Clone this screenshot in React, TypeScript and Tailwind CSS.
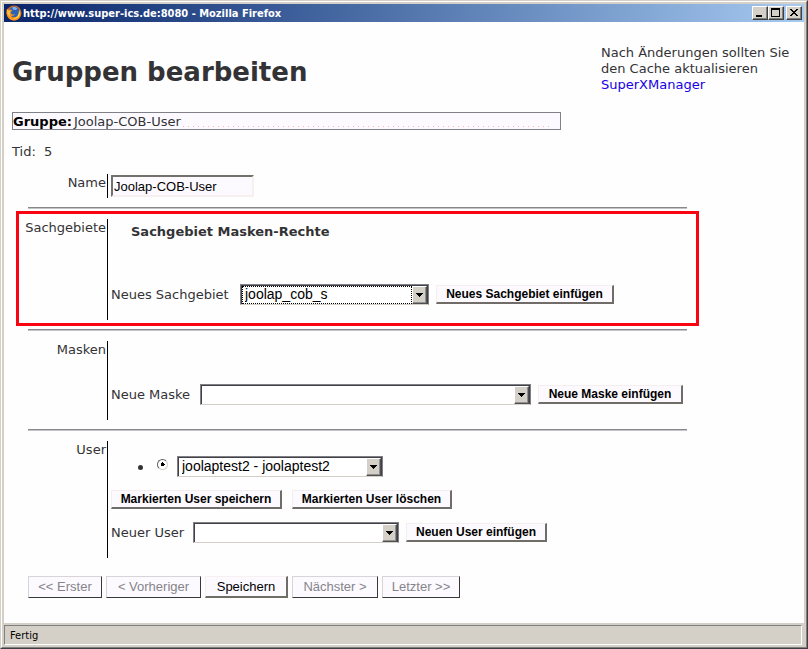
import type { ReactNode } from "react";

const sans = "font-['Liberation_Sans',Arial,sans-serif]";

function Firefox() {
  return (
    <svg viewBox="0 0 16 16" className="h-4 w-4 shrink-0" aria-hidden="true">
      <circle cx="8" cy="8" r="7.5" fill="#e06a10" />
      <circle cx="8.2" cy="6.8" r="5.3" fill="#2a63b8" />
      <path d="M6 2.500c2-1 4.500-.5 5.500 1.200L9.500 5 7 4.500z" fill="#7fb4ea" />
      <path d="M1 3.500 2.500 5 5 4.500l1.500 1.300-1.500.7-.3 1.500 1.800 1.800 2.500-.8c-.8 2-3.500 2.500-5 1.200 1.500 2.800 6 3 8 .3 1.500-2 1.500-4 .8-5.500 1.800 1.500 2.500 4.500 1.200 7-2 3.800-7.500 4.500-10.700 1.800C.3 10.700 0 7 1 3.500z" fill="#f79420" />
      <path d="M13 5c1.500 2 1.400 5-.5 7-1.500 1.700-4 2.300-6 1.500 3.500 0 6.500-2.500 6.500-8.500z" fill="#ffd84a" />
      <path d="M1.200 4.500 2.500 6l2-.6-.8 2.100c-.5 2 .5 4 2 5C2.500 11.500.7 8.500 1.200 4.500z" fill="#ffc13a" />
    </svg>
  );
}

function WindowButton({ label, children }: { label: string; children: ReactNode }) {
  return (
    <button
      aria-label={label}
      className="flex h-3.5 w-4 items-center justify-center border border-t-white border-l-white border-r-[#404040] border-b-[#404040] bg-[#d4d0c8] shadow-[inset_-1px_-1px_0_#808080]"
    >
      <svg viewBox="0 0 12 12" className="h-3 w-3 shrink-0" shapeRendering="crispEdges">
        {children}
      </svg>
    </button>
  );
}

function Combo({ id, label, width, options, focused }: { id: string; label?: string; width: string; options: string[]; focused?: boolean }) {
  return (
    <span className={`relative inline-block h-[21px] ${width}`}>
      <select
        id={id}
        aria-label={label}
        className={`block h-full w-full appearance-none border border-t-[#808084] border-l-[#808084] border-r-[#808084] border-b-[#d4d0c8] bg-white pl-1 text-sm leading-[19px] text-black shadow-[inset_1px_1px_0_#404048,inset_-1px_0_0_#404048] outline-none ${sans}`}
      >
        {options.map((o) => (
          <option key={o}>{o}</option>
        ))}
      </select>
      {focused && <span className="pointer-events-none absolute top-0.5 right-[17px] bottom-px left-0.5 border border-dotted border-black" />}
      <span className="pointer-events-none absolute top-0.5 right-0.5 flex h-[18px] w-[15px] items-center justify-center border border-t-white border-l-white border-r-[#505050] border-b-[#505050] bg-[#d4d0c8] shadow-[inset_-1px_-1px_0_#909090]">
        <svg viewBox="0 0 7 4" className="h-1 w-[7px]" shapeRendering="crispEdges">
          <path d="M0 0h7L3.500 4z" />
        </svg>
      </span>
    </span>
  );
}

function SmallButton({ width, children }: { width: string; children: ReactNode }) {
  return (
    <button
      className={`h-[19px] border border-t-[#f4eeee] border-l-[#f4eeee] border-r-2 border-b-2 border-r-[#706c68] border-b-[#706c68] bg-[#fcfaff] text-center text-xs leading-4 font-bold whitespace-nowrap text-black ${width} ${sans}`}
    >
      {children}
    </button>
  );
}

function NavButton({ width, disabled, children }: { width: string; disabled?: boolean; children: ReactNode }) {
  return (
    <button
      disabled={disabled}
      className={`h-[22px] border bg-[#fcfaff] text-center text-[13px] leading-5 whitespace-nowrap ${width} ${sans} ${
        disabled
          ? "border-t-[#d8d4d8] border-l-[#d8d4d8] border-r-[#38383c] border-b-[#38383c] text-[#86848a]"
          : "border-r-2 border-b-2 border-t-[#f8f0f0] border-l-[#f8f0f0] border-r-[#706c68] border-b-[#706c68] text-black"
      }`}
    >
      {children}
    </button>
  );
}

function Section({ label, htmlFor, height, children, marked }: { label: string; htmlFor?: string; height: string; children: ReactNode; marked?: boolean }) {
  return (
    <section className={`relative flex ${height}`}>
      <div className="flex w-20 shrink-0 justify-end border-r border-black pt-px pr-px">
        {htmlFor ? <label htmlFor={htmlFor}>{label}</label> : label}
      </div>
      <div className="min-w-0 flex-1 pl-[3px]">{children}</div>
      {marked && <div className="pointer-events-none absolute -top-2 -right-3 -bottom-1.5 -left-3 border-3 border-[#fb0412]" />}
    </section>
  );
}

function Rule() {
  return <hr className="mt-[9px] mb-2.5 h-0.5 border-0 border-t border-b border-t-[#88888c] border-b-[#c4c4c8]" />;
}

export default function App() {
  return (
    <div className="flex min-h-screen flex-col border border-t-[#d4d0c8] border-r-[#404044] border-b-[#404044] border-l-[#d4d0c8] bg-[#d4d0c8]">
      <div className="flex flex-1 flex-col border border-t-white border-r-[#808080] border-b-[#808080] border-l-white p-0.5">
        <header className="flex h-[18px] items-center bg-linear-to-r from-[#0a246a] to-[#a6caf0] px-0.5">
          <Firefox />
          <h2 className="flex-1 pt-px pl-px font-['DejaVu_Sans_Condensed','DejaVu_Sans',sans-serif] text-[11px] leading-4 font-bold whitespace-nowrap text-white">
            http://www.super-ics.de:8080 - Mozilla Firefox
          </h2>
          <WindowButton label="Minimieren"><path d="M2 8h6v2H2z" /></WindowButton>
          <WindowButton label="Maximieren"><path d="M1 1h9v9H1zM2 3v6h7V3z" fillRule="evenodd" /></WindowButton>
          <span className="w-0.5" />
          <WindowButton label="Schließen"><path d="M2 2h2v1h1v1h2V3h1V2h2v1H9v1H8v1H7v1h1v1h1v1h1v1H8V8H7V7H5v1H4v1H2V8h1V7h1V6h1V5H4V4H3V3H2z" /></WindowButton>
        </header>

        <main className="flex-1 bg-[#fefefe] px-2 font-['DejaVu_Sans',Verdana,sans-serif] text-[13px] leading-4 text-[#333336]">
          <div className="flex justify-between pt-[23px]">
            <h1 className="pt-[11px] text-[26px] leading-8 font-bold">Gruppen bearbeiten</h1>
            <p className="w-[195px] whitespace-nowrap">
              Nach Änderungen sollten Sie
              <br />
              den Cache aktualisieren
              <br />
              <a href="#superx" className="text-[#1800e8]">SuperXManager</a>
            </p>
          </div>

          <div className="mt-[19px] flex h-[18px] max-w-[549px] items-center border border-[#808088] bg-[#fcfaff]">
            <b className="pt-px text-black">Gruppe:</b>
            <span className="pt-px pl-0.5">Joolap-COB-User</span>
            <span className="mr-2 mb-0.5 ml-0.5 h-px flex-1 self-end bg-[repeating-linear-gradient(90deg,#ffb0b8_0_1px,transparent_1px_5px)]" />
          </div>
          <p className="mt-3.5 whitespace-pre">Tid:  5</p>

          <form className="ml-4 max-w-[659px] pt-3.5" onSubmit={(e) => e.preventDefault()}>
            <Section label="Name" htmlFor="name" height="h-6">
              <input
                id="name"
                defaultValue="Joolap-COB-User"
                className={`mt-px block h-[22px] w-[143px] border-2 border-t-[#74706c] border-l-[#74706c] border-r-[#f8f0f0] border-b-[#f8f0f0] bg-[#fcfaff] pl-px text-[13px] text-black outline-none ${sans}`}
              />
            </Section>
            <Rule />
            <Section label="Sachgebiete" height="h-[101px]" marked>
              <h3 className="pt-[5px] pl-5 font-bold">Sachgebiet Masken-Rechte</h3>
              <div className="mt-11 flex items-center">
                <label htmlFor="sachgebiet" className="w-[129px]">Neues Sachgebiet</label>
                <Combo id="sachgebiet" width="w-[189px]" options={["joolap_cob_s"]} focused />
                <span className="w-[7px]" />
                <SmallButton width="w-[178px]">Neues Sachgebiet einfügen</SmallButton>
              </div>
            </Section>
            <Rule />
            <Section label="Masken" height="h-[79px]">
              <div className="flex items-center pt-[43px]">
                <label htmlFor="maske" className="w-[89px]">Neue Maske</label>
                <Combo id="maske" width="w-[331px]" options={[""]} />
                <span className="w-[7px]" />
                <SmallButton width="w-[145px]">Neue Maske einfügen</SmallButton>
              </div>
            </Section>
            <Rule />
            <Section label="User" height="h-[117px]">
              <ul className="pt-[15px]">
                <li className="flex items-center pl-[27px]">
                  <span className="mt-0.5 h-[5px] w-[5px] rounded-full bg-[#333336]" />
                  <input
                    type="radio"
                    name="user"
                    aria-label="joolaptest2"
                    defaultChecked
                    className="mr-[9px] mb-1 ml-3.5 h-[11px] w-[11px] appearance-none rounded-full border border-t-[#606060] border-r-[#d4d0c8] border-b-[#d4d0c8] border-l-[#606060] bg-white bg-[radial-gradient(circle,#000_0_2px,transparent_2px)]"
                  />
                  <Combo id="user" label="User" width="w-[206px]" options={["joolaptest2 - joolaptest2"]} />
                </li>
              </ul>
              <div className="mt-[13px] flex gap-2.5">
                <SmallButton width="w-[171px]">Markierten User speichern</SmallButton>
                <SmallButton width="w-[160px]">Markierten User löschen</SmallButton>
              </div>
              <div className="mt-[13px] flex items-center">
                <label htmlFor="neuer" className="w-[82px]">Neuer User</label>
                <Combo id="neuer" width="w-[206px]" options={[""]} />
                <span className="w-[7px]" />
                <SmallButton width="w-[141px]">Neuen User einfügen</SmallButton>
              </div>
            </Section>
            <div className="mt-[18px] flex gap-1 pb-6">
              <NavButton width="w-[74px]" disabled>&lt;&lt; Erster</NavButton>
              <NavButton width="w-[95px]" disabled>&lt; Vorheriger</NavButton>
              <NavButton width="w-[83px]">Speichern</NavButton>
              <NavButton width="w-[86px]" disabled>Nächster &gt;</NavButton>
              <NavButton width="w-[78px]" disabled>Letzter &gt;&gt;</NavButton>
            </div>
          </form>
        </main>

        <footer className="bg-[#d4d0c8] pt-0.5 pr-0.5">
          <div className="h-5 border border-t-[#808080] border-l-[#808080] border-r-white border-b-white pl-[5px] font-['DejaVu_Sans_Condensed','DejaVu_Sans',sans-serif] text-[11px] leading-5 text-black">
            Fertig
          </div>
        </footer>
      </div>
    </div>
  );
}
